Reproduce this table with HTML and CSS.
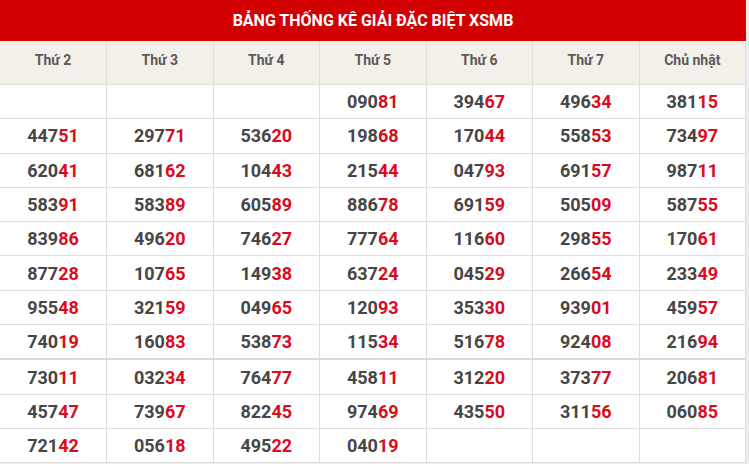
FILE: index.html
```html
<!DOCTYPE html>
<html lang="vi">
<head>
<meta charset="utf-8">
<title>Bảng thống kê giải đặc biệt XSMB</title>
<link rel="stylesheet" href="styles.css">
</head>
<body>
<div class="board">
  <div class="title">BẢNG THỐNG KÊ GIẢI ĐẶC BIỆT XSMB</div>
  <table class="stats">
    <thead>
      <tr><th>Thứ 2</th><th>Thứ 3</th><th>Thứ 4</th><th>Thứ 5</th><th>Thứ 6</th><th>Thứ 7</th><th>Chủ nhật</th></tr>
    </thead>
    <tbody>
      <tr><td></td><td></td><td></td><td>090<em>81</em></td><td>394<em>67</em></td><td>496<em>34</em></td><td>381<em>15</em></td></tr>
      <tr><td>447<em>51</em></td><td>297<em>71</em></td><td>536<em>20</em></td><td>198<em>68</em></td><td>170<em>44</em></td><td>558<em>53</em></td><td>734<em>97</em></td></tr>
      <tr><td>620<em>41</em></td><td>681<em>62</em></td><td>104<em>43</em></td><td>215<em>44</em></td><td>047<em>93</em></td><td>691<em>57</em></td><td>987<em>11</em></td></tr>
      <tr><td>583<em>91</em></td><td>583<em>89</em></td><td>605<em>89</em></td><td>886<em>78</em></td><td>691<em>59</em></td><td>505<em>09</em></td><td>587<em>55</em></td></tr>
      <tr><td>839<em>86</em></td><td>496<em>20</em></td><td>746<em>27</em></td><td>777<em>64</em></td><td>116<em>60</em></td><td>298<em>55</em></td><td>170<em>61</em></td></tr>
      <tr><td>877<em>28</em></td><td>107<em>65</em></td><td>149<em>38</em></td><td>637<em>24</em></td><td>045<em>29</em></td><td>266<em>54</em></td><td>233<em>49</em></td></tr>
      <tr><td>955<em>48</em></td><td>321<em>59</em></td><td>049<em>65</em></td><td>120<em>93</em></td><td>353<em>30</em></td><td>939<em>01</em></td><td>459<em>57</em></td></tr>
      <tr class="split"><td>740<em>19</em></td><td>160<em>83</em></td><td>538<em>73</em></td><td>115<em>34</em></td><td>516<em>78</em></td><td>924<em>08</em></td><td>216<em>94</em></td></tr>
      <tr><td>730<em>11</em></td><td>032<em>34</em></td><td>764<em>77</em></td><td>458<em>11</em></td><td>312<em>20</em></td><td>373<em>77</em></td><td>206<em>81</em></td></tr>
      <tr><td>457<em>47</em></td><td>739<em>67</em></td><td>822<em>45</em></td><td>974<em>69</em></td><td>435<em>50</em></td><td>311<em>56</em></td><td>060<em>85</em></td></tr>
      <tr><td>721<em>42</em></td><td>056<em>18</em></td><td>495<em>22</em></td><td>040<em>19</em></td><td></td><td></td><td></td></tr>
    </tbody>
  </table>
</div>
</body>
</html>
```

FILE: styles.css
```css
html, body {
  margin: 0;
  padding: 0;
  background: #ececec;
}

body {
  font-family: Roboto, "Liberation Sans", Arial, sans-serif;
  width: 749px;
  height: 464px;
  overflow: hidden;
}

.board {
  width: 746px;
  background: #ffffff;
}

.title {
  height: 41px;
  line-height: 41px;
  background: #d20000;
  color: #ffffff;
  font-weight: 700;
  font-size: 16px;
  text-align: center;
}

.stats {
  width: 746px;
  border-collapse: collapse;
  table-layout: fixed;
}

.stats th {
  height: 37px;
  padding: 0 0 6px;
  background: #f3efe9;
  color: #5a5a5a;
  font-weight: 700;
  font-size: 14px;
  text-align: center;
  border: 1px solid #e2ddd6;
  border-top: none;
}

.stats td {
  height: 33.3px;
  padding: 0;
  text-align: center;
  font-size: 18px;
  font-weight: 700;
  color: #464646;
  border: 1px solid #dedede;
}

.stats th:first-child,
.stats td:first-child {
  border-left: none;
}

.stats em {
  font-style: normal;
  color: #db0a1c;
}

.stats tr.split td {
  border-bottom: 2px solid #dadada;
}
```
